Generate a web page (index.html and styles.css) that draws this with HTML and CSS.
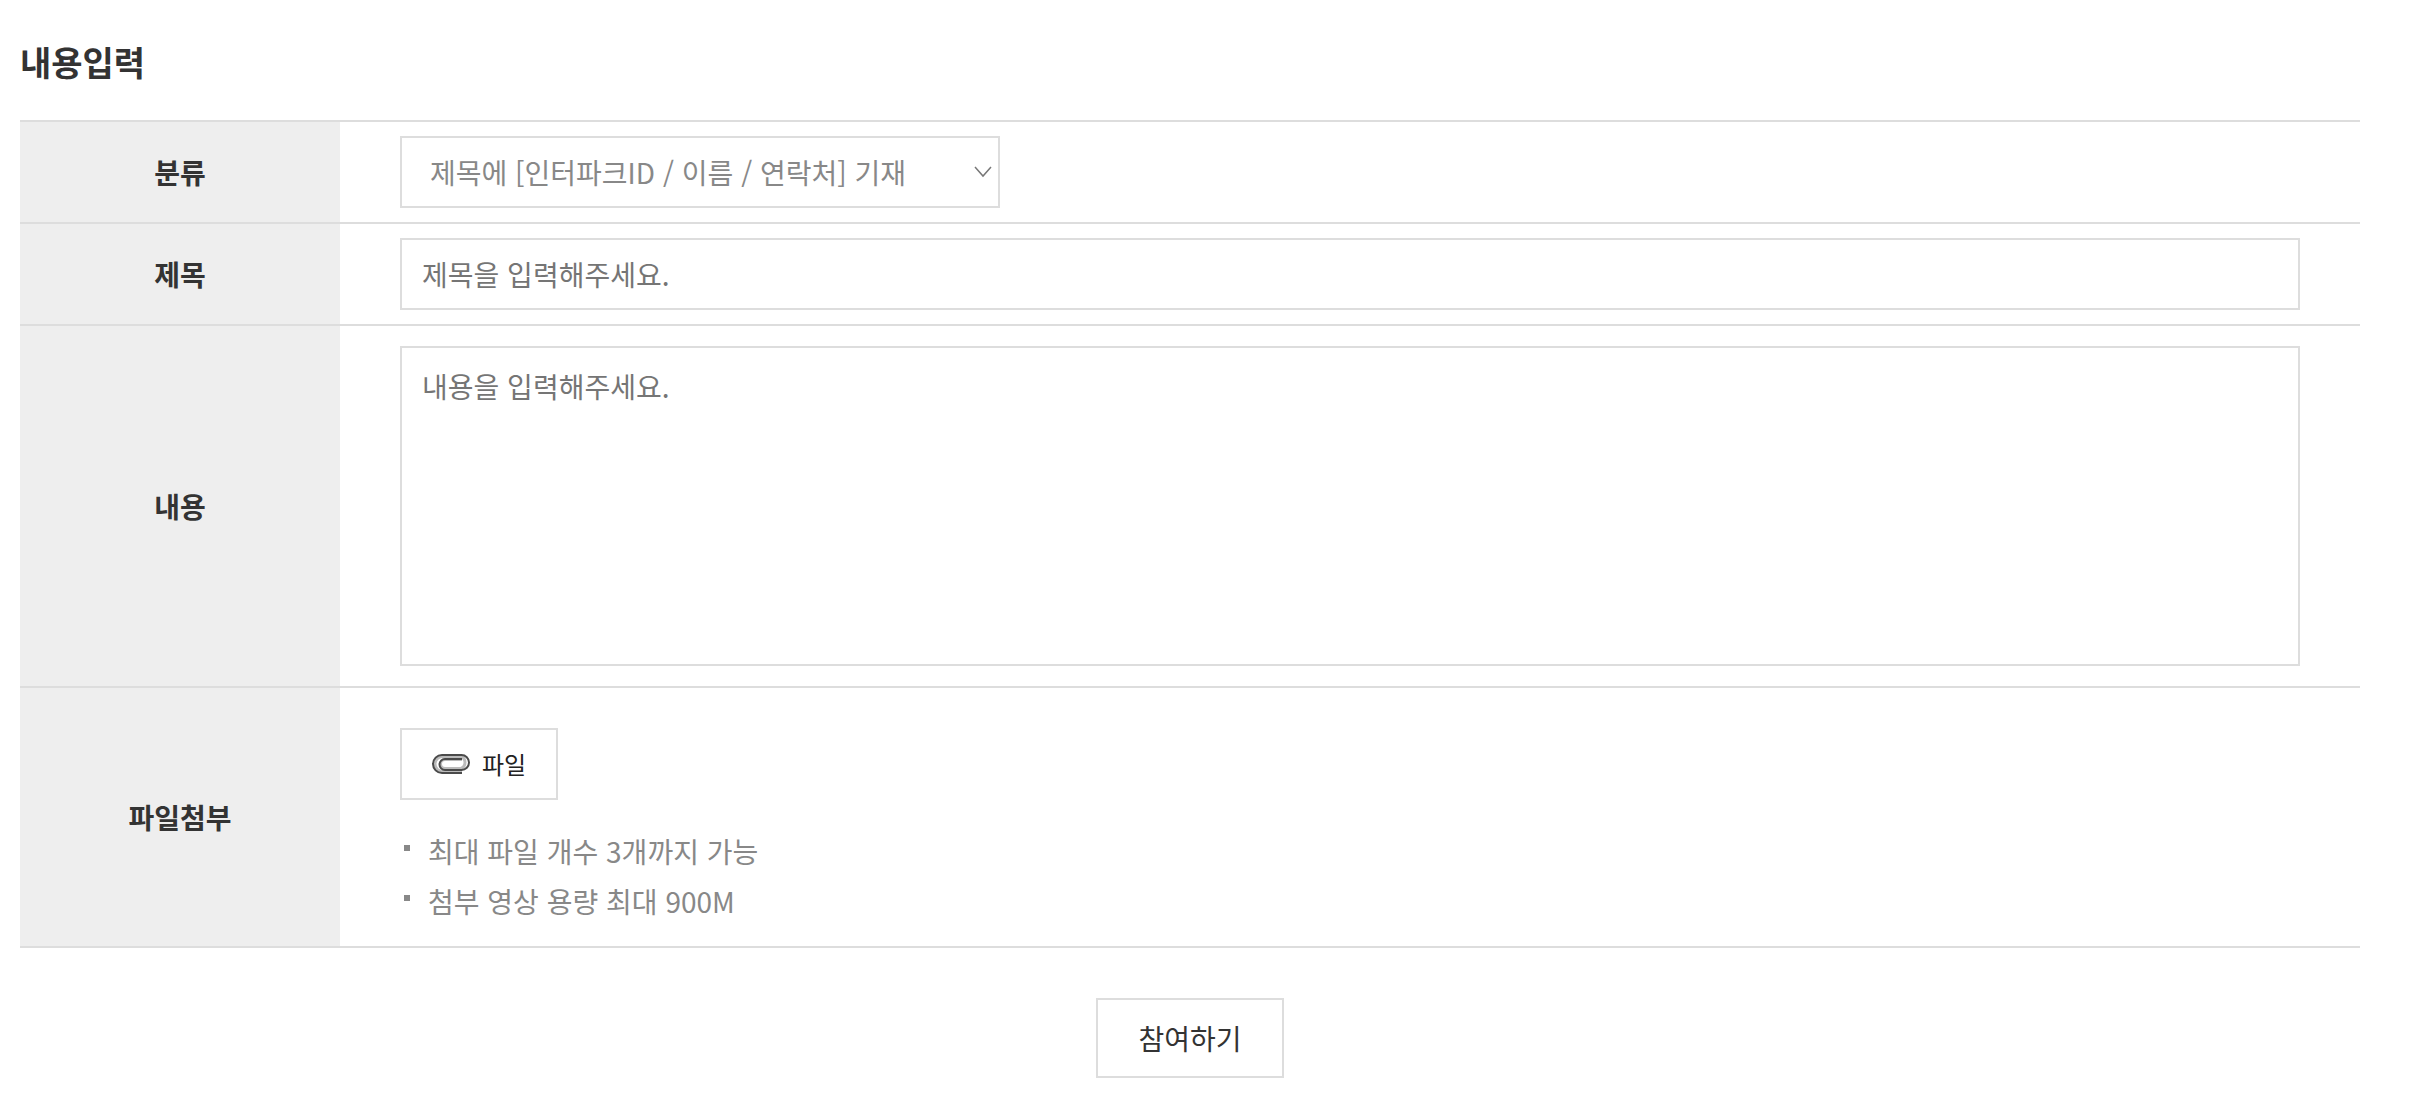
FILE: index.html
```html
<!DOCTYPE html>
<html lang="ko">
<head>
<meta charset="utf-8">
<meta name="viewport" content="width=device-width, initial-scale=1">
<title>내용입력</title>
<link rel="stylesheet" href="styles.css">
</head>
<body>
<main class="entry">
  <h1 class="entry-title">내용입력</h1>
  <form class="entry-form">
    <table class="form-table">
      <tbody>
        <tr>
          <th scope="row"><label for="category">분류</label></th>
          <td>
            <select class="field select" id="category">
              <option>제목에 [인터파크ID / 이름 / 연락처] 기재</option>
            </select>
          </td>
        </tr>
        <tr>
          <th scope="row"><label for="subject">제목</label></th>
          <td><input class="field" id="subject" type="text" placeholder="제목을 입력해주세요."></td>
        </tr>
        <tr>
          <th scope="row"><label for="content">내용</label></th>
          <td class="cell-content"><textarea class="field textarea" id="content" placeholder="내용을 입력해주세요."></textarea></td>
        </tr>
        <tr>
          <th scope="row"><label for="attach">파일첨부</label></th>
          <td class="cell-file">
            <button class="file-button" id="attach" type="button">
              <svg class="clip" viewBox="0 0 38 20" aria-hidden="true">
                <path class="clip-halo" d="M30 17.500H10.500a7.500 7.500 0 0 1 0-15H29a6.500 6.500 0 0 1 0 12H13a4.500 4.500 0 0 1 0-9H30"/>
                <path class="clip-line" d="M30 19H10a9 9 0 0 1 0-18H29.500a7.500 7.500 0 0 1 0 15H13a5.500 5.500 0 0 1 0-11H30"/>
              </svg>
              <span>파일</span>
            </button>
            <ul class="notes">
              <li>최대 파일 개수 3개까지 가능</li>
              <li>첨부 영상 용량 최대 900M</li>
            </ul>
          </td>
        </tr>
      </tbody>
    </table>
    <button class="submit" type="submit">참여하기</button>
  </form>
</main>
</body>
</html>
```
FILE: styles.css
```css
* {
  box-sizing: border-box;
}

body {
  margin: 0;
  background: #fff;
  color: #333;
  font-family: "Noto Sans CJK KR", "Noto Sans", sans-serif;
  font-size: 28px;
  line-height: 40px;
}

.entry {
  padding: 40px 56px 20px 20px;
}

.entry-title {
  margin: 0 0 36px;
  font-size: 34px;
  font-weight: 700;
  line-height: 44px;
}

.entry-form {
  display: flex;
  flex-direction: column;
  align-items: center;
  gap: 50px;
}

.form-table {
  width: 100%;
  border-spacing: 0;
  border-top: 2px solid #ddd;
}

.form-table th,
.form-table td {
  border-bottom: 2px solid #ddd;
}

.form-table th {
  width: 320px;
  padding: 0;
  background: #eee;
  font-weight: 700;
  text-align: center;
}

.form-table td {
  padding: 14px 60px;
}

.form-table .cell-content {
  padding-block: 20px;
}

.form-table .cell-file {
  padding-block: 40px 20px;
}

.field {
  display: block;
  width: 100%;
  height: 72px;
  margin: 0;
  padding: 0 20px;
  border: 2px solid #ddd;
  border-radius: 0;
  background: #fff;
  color: #333;
  font: inherit;
}

.field::placeholder {
  color: #757575;
  opacity: 1;
}

.select {
  max-width: 600px;
  padding: 0 28px;
  appearance: none;
  background: #fff url("data:image/svg+xml,%3Csvg xmlns='http://www.w3.org/2000/svg' width='18' height='12' fill='none' stroke='%23777' stroke-width='1.5'%3E%3Cpath d='M1 1l8 9 8-9'/%3E%3C/svg%3E") no-repeat right 6px center;
  color: #888;
}

.textarea {
  height: 320px;
  padding: 18px 20px;
  resize: none;
}

.file-button {
  display: flex;
  align-items: center;
  gap: 12px;
  height: 72px;
  margin: 0 0 26px;
  padding: 0 30px;
  border: 2px solid #ddd;
  background: #fff;
  color: #222;
  font: inherit;
  font-size: 24px;
}

.clip {
  width: 38px;
  height: 20px;
  fill: none;
}

.clip-halo {
  stroke: #bbb;
  stroke-width: 3;
}

.clip-line {
  stroke: #4a4a4a;
  stroke-width: 2;
}

.notes {
  margin: 0;
  padding: 0;
  color: #888;
  line-height: 50px;
  list-style: none;
}

.notes li {
  display: flex;
  align-items: center;
  gap: 18px;
  padding-left: 4px;
}

.notes li::before {
  width: 6px;
  height: 6px;
  margin-bottom: 6px;
  background: #888;
  content: "";
}

.submit {
  height: 80px;
  padding: 0 40px;
  border: 2px solid #ddd;
  background: #fff;
  color: #333;
  font: inherit;
}
```
